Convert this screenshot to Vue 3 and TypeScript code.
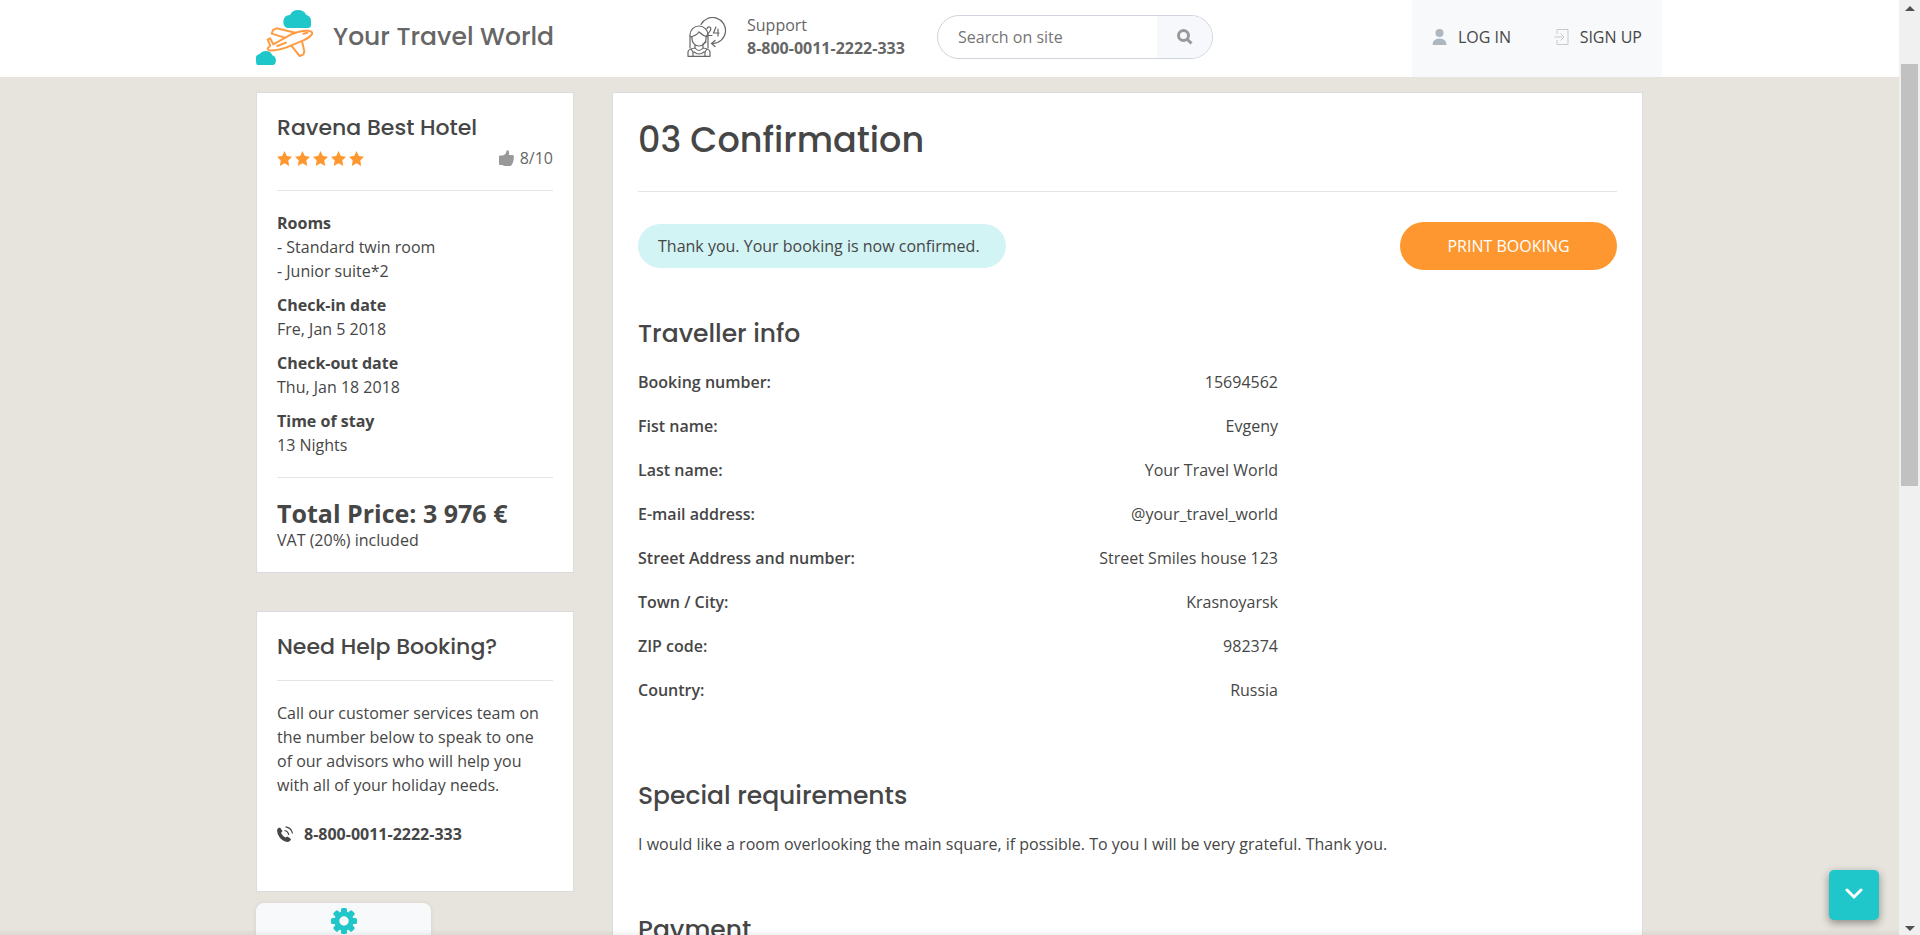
<script setup lang="ts">
import { ref } from 'vue'

interface Entry {
  label: string
  value: string
}

interface Stay {
  title: string
  lines: string[]
}

const query = ref('')

const stay: Stay[] = [
  { title: 'Rooms', lines: ['- Standard twin room', '- Junior suite*2'] },
  { title: 'Check-in date', lines: ['Fre, Jan 5 2018'] },
  { title: 'Check-out date', lines: ['Thu, Jan 18 2018'] },
  { title: 'Time of stay', lines: ['13 Nights'] },
]

const traveller: Entry[] = [
  { label: 'Booking number:', value: '15694562' },
  { label: 'Fist name:', value: 'Evgeny' },
  { label: 'Last name:', value: 'Your Travel World' },
  { label: 'E-mail address:', value: '@your_travel_world' },
  { label: 'Street Address and number:', value: 'Street Smiles house 123' },
  { label: 'Town / City:', value: 'Krasnoyarsk' },
  { label: 'ZIP code:', value: '982374' },
  { label: 'Country:', value: 'Russia' },
]

const teeth = [0, 45, 90, 135, 180, 225, 270, 315]
</script>

<template>
  <div class="window">
    <div class="page">
      <header class="header">
        <div class="container bar">
          <a class="brand" href="#">
            <svg class="logo" viewBox="48 30 171 165" aria-hidden="true">
              <path class="cloud" d="M142 84 Q130 80 130 65 Q131 46 150 45 Q157 30 174 30 Q192 30 198 44 Q213 48 213 62 V78 Q211 84 204 84 Z" />
              <path class="cloud" d="M52 195 Q48 192 48 184 V172 Q49 164 59 162 Q66 153 78 153 Q92 153 97 166 Q108 170 108 183 Q107 193 100 195 Z" />
              <path class="plane" d="M100 133 L152 104 Q180 91 204 92 Q218 94 217 101 Q208 114 190 121 L138 143 Q108 153 86 151 L83 145 L91 137 L83 119 L90 115 Z" />
              <path class="plane" d="M134 113 L95 101 L99 90 L110 85 L166 98" />
              <path class="plane" d="M154 137 L179 168 L190 164 L193 154 L186 124 M112 138 L138 128 M190 101 L202 98" />
            </svg>
            <span class="brand-name">Your Travel World</span>
          </a>
          <div class="support">
            <svg class="operator" viewBox="0 0 40 40" aria-hidden="true">
              <path d="M14 7.500 A13 13 0 1 1 26 26.500 M28 23.500 L24.500 26.500 L28 29.500" />
              <path d="M3 31 V18 A9 9 0 0 1 21 18 V31 M3 20 Q9 19 12 15 Q16 19 21 20 M5 19.500 V22 A7 7 0 0 0 19 22 V19.500" />
              <path d="M8 28 V31 Q12 36 16 31 V28 M1 39.300 V35 Q1 32 8 31 M23 39.300 V35 Q23 32 16 31 M1 39.300 H23 M6 39 V35 L4 32 M18 39 V35 L20 32 M7 35 Q12 39 17 35 M16 27 L19 25" />
              <path d="M20 12 Q20.500 9.500 22.500 10 Q25 11 23 14 L20 18.500 H25 M29 10 L26.500 16 H32 M31 12 V19" />
            </svg>
            <div class="support-text">
              <span>Support</span>
              <b>8-800-0011-2222-333</b>
            </div>
          </div>
          <form class="search" @submit.prevent>
            <input v-model="query" type="text" placeholder="Search on site" aria-label="Search on site" />
            <button type="submit" aria-label="Search">
              <svg viewBox="0 0 16 16" aria-hidden="true">
                <circle cx="6.500" cy="6.500" r="5" />
                <path d="M10.500 10.500 L14.500 14.500" />
              </svg>
            </button>
          </form>
          <nav class="account">
            <a href="#">
              <svg class="user" viewBox="0 0 14 16" aria-hidden="true">
                <circle cx="7" cy="4" r="4" />
                <path d="M0 16 Q0 9.500 7 9.500 Q14 9.500 14 16 Z" />
              </svg>
              LOG IN
            </a>
            <a href="#">
              <svg class="enter" viewBox="0 0 14 16" aria-hidden="true">
                <path d="M2.500 5 V0.500 H13.500 V15.500 H2.500 V11" />
                <path d="M0 8 H8 M6 4.500 L9.500 8 L6 11.500" />
              </svg>
              SIGN UP
            </a>
          </nav>
        </div>
      </header>

      <div class="container columns">
        <aside class="side">
          <section class="card">
            <h3>Ravena Best Hotel</h3>
            <div class="rating">
              <span class="stars" role="img" aria-label="5 stars">
                <svg v-for="n in 5" :key="n" viewBox="0 0 14 14" aria-hidden="true">
                  <path d="M7 0 L9.200 4.600 L14 5.300 L10.500 8.800 L11.400 14 L7 11.500 L2.600 14 L3.500 8.800 L0 5.300 L4.800 4.600 Z" />
                </svg>
              </span>
              <span class="score">
                <svg viewBox="0 0 15 16" aria-hidden="true">
                  <path d="M0 6.500 Q0 5.500 1 5.500 L4 5.500 Q7 4.500 7.500 1 Q8 0 9.200 0.300 Q10.500 1 10 5 H13.500 Q15 5.200 14.800 6.700 Q15.200 8 14.500 9 Q15 10.500 14 11.500 Q14.300 13 13.200 13.800 Q13 15.800 11 16 H6 Q4.500 16 3.500 15 H1 Q0 15 0 14 Z" />
                </svg>
                8/10
              </span>
            </div>
            <hr />
            <dl class="stay">
              <div v-for="item in stay" :key="item.title">
                <dt>{{ item.title }}</dt>
                <dd v-for="line in item.lines" :key="line">{{ line }}</dd>
              </div>
            </dl>
            <hr />
            <p class="total">Total Price: 3 976 €</p>
            <p>VAT (20%) included</p>
          </section>

          <section class="card help">
            <h3>Need Help Booking?</h3>
            <hr />
            <p>Call our customer services team on the number below to speak to one of our advisors who will help you with all of your holiday needs.</p>
            <a class="phone" href="tel:880000112222333">
              <svg viewBox="0 0 16 16" aria-hidden="true">
                <path class="handset" d="M3 1.500 L5.500 5 L4 7 Q5.500 10 8.500 11.500 L10.500 10.500 L14 13 Q13.500 15.500 11 16 Q7 16 3 12 Q0 8.500 0 4 Q0.500 1.800 3 1.500 Z" />
                <path class="wave" d="M7.500 4.500 Q11 5 11.800 9 M8.500 0.800 Q14.500 1.500 15.500 7.500" />
              </svg>
              8-800-0011-2222-333
            </a>
          </section>
        </aside>

        <main class="card main">
          <h1>03 Confirmation</h1>
          <hr />
          <div class="status">
            <p class="notice">Thank you. Your booking is now confirmed.</p>
            <button class="print" type="button">PRINT BOOKING</button>
          </div>
          <h2>Traveller info</h2>
          <table>
            <tbody>
              <tr v-for="row in traveller" :key="row.label">
                <th scope="row">{{ row.label }}</th>
                <td>{{ row.value }}</td>
              </tr>
            </tbody>
          </table>
          <h2 class="special">Special requirements</h2>
          <p class="wish">I would like a room overlooking the main square, if possible. To you I will be very grateful. Thank you.</p>
          <h2>Payment</h2>
        </main>
      </div>

      <div class="dock">
        <div class="container">
          <button class="settings" type="button" aria-label="Settings">
            <svg viewBox="-13 -13 26 26" aria-hidden="true">
              <rect v-for="angle in teeth" :key="angle" x="-3" y="-13" width="6" height="7" rx="1.500" :transform="`rotate(${angle})`" />
              <circle r="7.200" />
            </svg>
          </button>
        </div>
        <div class="edge"></div>
      </div>

      <button class="down" type="button" aria-label="Scroll down">
        <svg viewBox="0 0 18 12" aria-hidden="true">
          <path d="M2 2 L9 9 L16 2" />
        </svg>
      </button>
    </div>

    <div class="scrollbar" aria-hidden="true">
      <svg viewBox="0 0 10 5"><path d="M5 0 L10 5 H0 Z" /></svg>
      <div class="track"><div class="thumb"></div></div>
      <svg viewBox="0 0 10 5"><path d="M0 0 H10 L5 5 Z" /></svg>
    </div>
  </div>
</template>

<style>
body {
  margin: 0;
}
</style>

<style scoped>
.window {
  display: flex;
  height: 100vh;
  overflow: hidden;
  background: #e7e4dd;
  color: #464646;
  font: 400 16px/24px "Open Sans", "Noto Sans", sans-serif;
}

.window * {
  box-sizing: border-box;
}

.page {
  position: relative;
  flex: 1;
  min-width: 0;
  overflow: hidden;
}

.container {
  max-width: 1417px;
  margin: 0 auto;
  padding: 0 15px;
}

svg {
  display: block;
  flex: none;
}

a {
  color: inherit;
  text-decoration: none;
}

button {
  border: 0;
  padding: 0;
  font: inherit;
  cursor: pointer;
}

h1,
h2,
h3,
p,
dl,
dd {
  margin: 0;
}

h1,
h2,
h3,
.brand-name {
  font-family: Poppins, Inter, sans-serif;
  font-weight: 500;
}

.header {
  background: #fff;
}

.bar {
  display: grid;
  grid-template-columns: 431px 250px 276px 1fr;
  align-items: center;
  height: 77px;
}

.brand,
.support,
.search {
  margin-bottom: 3px;
}

.brand {
  display: flex;
  align-items: center;
  gap: 20px;
  color: #666;
}

.brand-name {
  font-size: 25px;
  line-height: 32px;
}

.logo {
  width: 57px;
  height: 55px;
}

.cloud {
  fill: #1fc7ca;
}

.plane {
  fill: none;
  stroke: #ff9c43;
  stroke-width: 6;
  stroke-linejoin: round;
  stroke-linecap: round;
}

.support {
  display: flex;
  align-items: center;
  gap: 20px;
  color: #666;
}

.operator {
  width: 40px;
  height: 40px;
  fill: none;
  stroke: #666;
  stroke-width: 1.2;
  stroke-linecap: round;
}

.support-text {
  display: flex;
  flex-direction: column;
  line-height: 23px;
}

.search {
  display: flex;
  height: 44px;
  border: 1px solid #cfd4dc;
  border-radius: 22px;
  overflow: hidden;
  background: #fff;
}

.search input {
  flex: 1;
  min-width: 0;
  border: 0;
  padding: 0 20px;
  background: transparent;
  color: #666;
  font: inherit;
  outline: 0;
}

.search input::placeholder {
  color: #757575;
  opacity: 1;
}

.search button {
  display: grid;
  place-items: center;
  width: 55px;
  background: #f7f8fb;
}

.search svg {
  width: 16px;
  height: 16px;
  fill: none;
  stroke: #999;
  stroke-width: 3;
}

.account {
  display: flex;
  align-items: center;
  justify-content: space-between;
  justify-self: end;
  width: 250px;
  height: 77px;
  margin-right: -19px;
  padding: 0 20px 3px;
  background: #f8f9fb;
}

.account a {
  display: flex;
  align-items: center;
  gap: 11px;
}

.account svg {
  width: 15px;
  height: 16px;
}

.user {
  fill: #adb7bf;
}

.enter {
  fill: none;
  stroke: #c5cacf;
}

.columns {
  display: grid;
  grid-template-columns: 318px minmax(0, 1fr);
  align-items: start;
  gap: 38px;
  padding-top: 15px;
}

.side {
  display: grid;
  gap: 38px;
}

.card {
  border: 1px solid #dbdcde;
  padding: 20px;
  background: #fff;
}

h3 {
  font-size: 22px;
  line-height: 30px;
}

hr {
  height: 1px;
  margin: 20px 0;
  border: 0;
  background: #e2e4e5;
}

.rating {
  display: flex;
  align-items: center;
  justify-content: space-between;
  margin-top: 3px;
}

.stars {
  display: flex;
  gap: 3px;
}

.stars svg {
  width: 15px;
  height: 15px;
  fill: #fe972f;
}

.score {
  display: flex;
  align-items: center;
  gap: 6px;
  color: #666;
}

.score svg {
  width: 15px;
  height: 16px;
  fill: #999;
}

.stay {
  display: grid;
  gap: 10px;
}

dt {
  font-weight: 700;
}

.total {
  font-size: 25px;
  font-weight: 700;
  line-height: 30px;
}

.help {
  padding-bottom: 45px;
}

.help hr {
  margin-top: 18px;
}

.help p {
  padding-right: 8px;
}

.phone {
  display: flex;
  align-items: center;
  gap: 11px;
  margin-top: 25px;
  font-weight: 700;
}

.phone svg {
  width: 16px;
  height: 16px;
}

.handset {
  fill: #464646;
}

.wave {
  fill: none;
  stroke: #464646;
  stroke-width: 1.2;
}

.main {
  padding: 25px 25px 60px;
}

h1 {
  padding-bottom: 10px;
  font-size: 35px;
  line-height: 44px;
}

.main hr {
  margin: 19px 0 30px;
}

.status {
  display: flex;
  align-items: center;
  justify-content: space-between;
}

.notice {
  min-width: 368px;
  padding: 10px 20px;
  border-radius: 22px;
  background: #d2f4f4;
}

.print {
  width: 217px;
  height: 48px;
  border-radius: 24px;
  background: #fe972f;
  color: #fff;
}

h2 {
  margin-top: 48px;
  font-size: 25px;
  line-height: 32px;
}

table {
  width: 640px;
  max-width: 100%;
  margin-top: 10px;
  border-collapse: collapse;
}

th,
td {
  padding: 10px 0;
}

th {
  font-weight: 600;
  text-align: left;
}

td {
  text-align: right;
}

.special {
  margin-top: 68px;
}

.wish {
  margin: 20px 0 58px;
}

.dock {
  position: absolute;
  right: 0;
  bottom: 0;
  left: 0;
}

.edge {
  box-shadow: 0 0 5px 1px rgba(0, 0, 0, 0.15);
}

.settings {
  display: grid;
  place-items: center;
  width: 175px;
  height: 32px;
  padding-top: 4px;
  border-radius: 8px 8px 0 0;
  background: #f8f9fb;
  box-shadow: 0 0 5px rgba(0, 0, 0, 0.08);
}

.settings svg {
  width: 26px;
  height: 26px;
  fill: #1fc7ca;
}

.settings circle {
  stroke: #1fc7ca;
  stroke-width: 5;
  fill: #f8f9fb;
}

.down {
  position: absolute;
  right: 20px;
  bottom: 15px;
  display: grid;
  place-items: center;
  width: 50px;
  height: 50px;
  padding-bottom: 2px;
  border-radius: 5px;
  background: #1fc7ca;
  box-shadow: 0 3px 8px rgba(0, 0, 0, 0.4);
}

.down svg {
  width: 18px;
  height: 12px;
  fill: none;
  stroke: #fff;
  stroke-width: 3;
  stroke-linecap: round;
}

.scrollbar {
  display: flex;
  flex-direction: column;
  align-items: center;
  width: 21px;
  padding: 6px 0 4px;
  background: #f0f0f0;
}

.scrollbar svg {
  width: 10px;
  height: 5px;
  fill: #505050;
}

.track {
  flex: 1;
  padding-top: 53px;
}

.thumb {
  width: 17px;
  height: 49%;
  background: #c1c1c1;
}
</style>
